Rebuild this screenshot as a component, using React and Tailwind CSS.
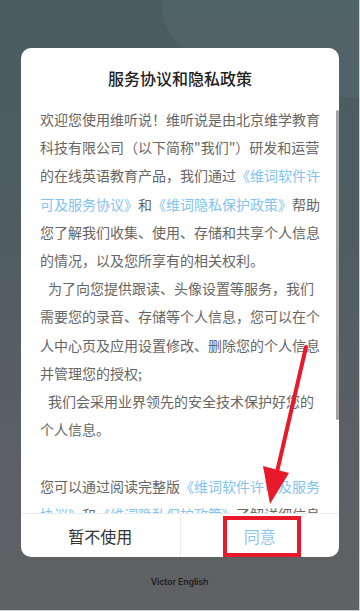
import React from "react";

const L = ({ children }) => <span className="text-[#82c3ef]">{children}</span>;

export default function App() {
  const lines = [
    <>欢迎您使用维听说！维听说是由北京维学教育</>,
    <>科技有限公司（以下简称"我们"）研发和运营</>,
    <>的在线英语教育产品，我们通过<L>《维词软件许</L></>,
    <><L>可及服务协议》</L>和<L>《维词隐私保护政策》</L>帮助</>,
    <>您了解我们收集、使用、存储和共享个人信息</>,
    <>的情况，以及您所享有的相关权利。</>,
    <span className="pl-[8px]">为了向您提供跟读、头像设置等服务，我们</span>,
    <>需要您的录音、存储等个人信息，您可以在个</>,
    <>人中心页及应用设置修改、删除您的个人信息</>,
    <>并管理您的授权;</>,
    <span className="pl-[8px]">我们会采用业界领先的安全技术保护好您的</span>,
    <>个人信息。</>,
    <>&nbsp;</>,
    <>您可以通过阅读完整版<L>《维词软件许可及服务</L></>,
    <><L>协议》</L>和<L>《维词隐私保护政策》</L>了解详细信息</>,
  ];
  return (
    <div
      className="relative w-[360px] h-[611px] overflow-hidden border-r border-b border-[#cfd0d2] bg-[linear-gradient(180deg,#4a5c62_0%,#4f5d62_40%,#5c6064_75%,#606165_100%)]"
      style={{ fontFamily: '"Noto Sans CJK SC", "Noto Sans", sans-serif' }}
    >
      <div className="absolute right-[-60px] top-[-40px] w-[260px] h-[120px] rounded-full bg-[#55676c] opacity-60 rotate-[15deg]" />
      <div className="relative pt-[48px] px-[21px]">
        <div className="relative bg-white rounded-[10px] h-[509px] w-[318px] flex flex-col overflow-hidden">
          <div className="h-[57px] pt-[19px] text-center text-[16px] leading-[22px] font-medium text-[#222]">
            服务协议和隐私政策
          </div>
          <div className="h-[408px] overflow-hidden px-[19px] text-[14px] leading-[28.2px] text-[#666]">
            {lines.map((l, i) => (
              <div key={i} className="whitespace-nowrap">
                {l}
              </div>
            ))}
          </div>
          <div className="h-[44px] border-t border-[#ececec] flex">
            <div className="flex-1 flex items-center justify-center text-[16px] text-[#333]">暂不使用</div>
            <div className="flex-1 border-l border-[#ececec] flex items-center justify-center text-[16px] text-[#8ec8f0]">
              同意
            </div>
          </div>
          <div className="absolute left-[315px] top-[62px] w-[3px] h-[310px] rounded-full bg-[#a3a3a3]" />
        </div>
      </div>
      <div
        className="absolute left-0 right-0 top-[574px] text-center text-[9px] leading-[16px] font-semibold tracking-[-0.2px] text-[#1f1f1f]"
        style={{ fontFamily: "Inter, sans-serif" }}
      >
        Victor English
      </div>
      <div className="absolute left-[223px] top-[516px] w-[78px] h-[41px] border-[4px] border-[#e8192a]" />
      <svg className="absolute left-0 top-0" width="360" height="611" viewBox="0 0 360 611">
        <line x1="306" y1="347" x2="277" y2="472" stroke="#e8192a" strokeWidth="4" strokeLinecap="round" />
        <polygon points="263,466 289,473 270,504" fill="#e8192a" />
      </svg>
    </div>
  );
}
